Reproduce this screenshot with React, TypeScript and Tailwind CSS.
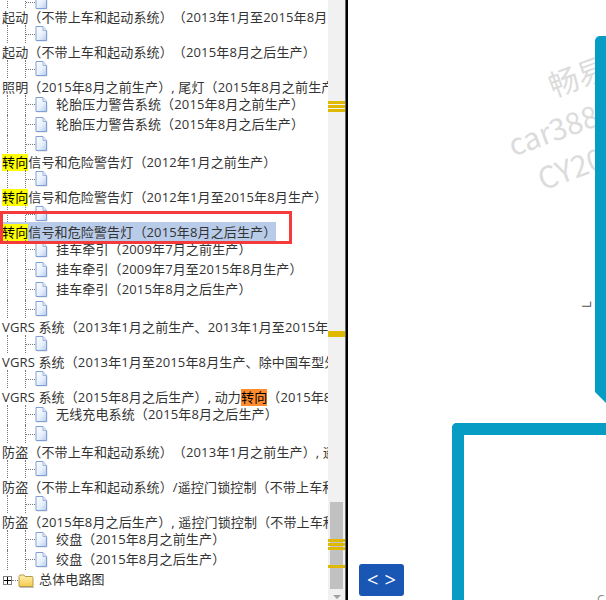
const font = "font-['Open_Sans','Noto_Sans_CJK_SC',sans-serif]";

function FileIcon() {
  return (
    <svg width="13" height="16" viewBox="0 0 13 16" className="shrink-0">
      <defs>
        <linearGradient id="fileGrad" x1="0" y1="0" x2="1" y2="1">
          <stop offset="0" stopColor="#ffffff" />
          <stop offset="0.55" stopColor="#e8f0fc" />
          <stop offset="1" stopColor="#b4ccf2" />
        </linearGradient>
      </defs>
      <path d="M2 15.5H12.5V5L9 1.5H2Z" fill="#c9c9c9" opacity="0.6" />
      <path d="M1 14.5H11.5V4.5L8 .5H1Z" fill="url(#fileGrad)" stroke="#7f9fd6" />
      <path d="M8 .5V4.5H11.5" fill="#dfe9fa" stroke="#9db6e0" />
    </svg>
  );
}

function FolderIcon() {
  return (
    <svg width="16" height="15" viewBox="0 0 16 15" className="shrink-0">
      <defs>
        <linearGradient id="folderGrad" x1="0" y1="0" x2="0" y2="1">
          <stop offset="0" stopColor="#fff3b0" />
          <stop offset="1" stopColor="#f3c94e" />
        </linearGradient>
      </defs>
      <path d="M1 3.5L2 2H6L7 3.5H14.5L15 4.5V13.5H1Z" fill="url(#folderGrad)" stroke="#b79a4a" />
      <path d="M2 14.5H16" stroke="#bdbdbd" />
    </svg>
  );
}

function Guides() {
  return (
    <>
      <span className="ml-[7px] w-[18px] shrink-0 self-stretch border-l border-dotted border-[#777]" />
      <span className="w-[10px] shrink-0 self-stretch flex flex-col border-l border-dotted border-[#777]">
        <span className="mt-[9px] w-full border-t border-dotted border-[#777]" />
      </span>
    </>
  );
}

function IconRow({ h }: { h: string }) {
  return (
    <div className={`flex ${h}`}>
      <Guides />
      <span className="mt-px"><FileIcon /></span>
    </div>
  );
}

function LeafRow({ text }: { text: string }) {
  return (
    <div className="flex h-[20px]">
      <Guides />
      <span className="mt-[2px]"><FileIcon /></span>
      <span className="ml-[8px] leading-[18px] whitespace-nowrap">{text}</span>
    </div>
  );
}

function TextRow({ children }: { children: React.ReactNode }) {
  return (
    <div className="h-[17px] pl-[2px] leading-[18px] whitespace-nowrap">{children}</div>
  );
}

const Hit = () => <span className="inline-block h-[17px] bg-[#ffff00] leading-[17px] text-black">转向</span>;

function Tree() {
  return (
    <div className="-mt-[7px] tracking-[0.14px] [text-spacing-trim:space-all] [text-autospace:no-autospace] [font-kerning:none]">
      <IconRow h="h-[15px]" />
      <TextRow>起动（不带上车和起动系统）（2013年1月至2015年8月生产）</TextRow>
      <IconRow h="h-[18px]" />
      <TextRow>起动（不带上车和起动系统）（2015年8月之后生产）</TextRow>
      <IconRow h="h-[18px]" />
      <TextRow>照明（2015年8月之前生产）, 尾灯（2015年8月之前生产）</TextRow>
      <LeafRow text="轮胎压力警告系统（2015年8月之前生产）" />
      <LeafRow text="轮胎压力警告系统（2015年8月之后生产）" />
      <IconRow h="h-[18px]" />
      <TextRow><Hit />信号和危险警告灯（2012年1月之前生产）</TextRow>
      <IconRow h="h-[18px]" />
      <TextRow><Hit />信号和危险警告灯（2012年1月至2015年8月生产）</TextRow>
      <IconRow h="h-[17px]" />
      <div className="h-[18px] pl-[2px] leading-[20px] whitespace-nowrap">
        <span className="inline-block h-[19px] bg-[#b8cbe8]"><Hit />信号和危险警告灯（2015年8月之后生产）</span>
      </div>
      <LeafRow text="挂车牵引（2009年7月之前生产）" />
      <LeafRow text="挂车牵引（2009年7月至2015年8月生产）" />
      <LeafRow text="挂车牵引（2015年8月之后生产）" />
      <IconRow h="h-[18px]" />
      <TextRow>VGRS 系统（2013年1月之前生产、2013年1月至2015年8月生产）</TextRow>
      <IconRow h="h-[18px]" />
      <TextRow>VGRS 系统（2013年1月至2015年8月生产、除中国车型外）</TextRow>
      <IconRow h="h-[18px]" />
      <TextRow>VGRS 系统（2015年8月之后生产）, 动力<span className="inline-block h-[17px] bg-[#ff8c2e] leading-[17px] text-black">转向</span>（2015年8月之后生产）</TextRow>
      <LeafRow text="无线充电系统（2015年8月之后生产）" />
      <IconRow h="h-[18px]" />
      <TextRow>防盗（不带上车和起动系统）（2013年1月之前生产）, 遥控门锁控制</TextRow>
      <IconRow h="h-[18px]" />
      <TextRow>防盗（不带上车和起动系统）/遥控门锁控制（不带上车和起动系统）</TextRow>
      <IconRow h="h-[18px]" />
      <TextRow>防盗（2015年8月之后生产）, 遥控门锁控制（不带上车和起动系统）</TextRow>
      <LeafRow text="绞盘（2015年8月之前生产）" />
      <LeafRow text="绞盘（2015年8月之后生产）" />
      <div className="flex h-[20px] items-center pl-[3px]">
        <span className="flex h-[9px] w-[9px] shrink-0 items-center justify-center border border-[#808080] bg-white">
          <svg width="7" height="7" viewBox="0 0 7 7"><path d="M0 3.5H7M3.5 0V7" stroke="#000" /></svg>
        </span>
        <span className="h-0 w-[6px] border-t border-dotted border-[#777]" />
        <FolderIcon />
        <span className="ml-[5px] whitespace-nowrap">总体电路图</span>
      </div>
    </div>
  );
}

function Mark({ top }: { top: string }) {
  return <div className={`absolute left-0 h-[3px] w-full bg-[#dfb800] ${top}`} />;
}

export default function App() {
  return (
    <div className={`flex h-[600px] w-[606px] overflow-hidden bg-white text-[13px] text-[#333] ${font}`}>
      <div className="w-[328px] shrink-0 overflow-hidden">
        <Tree />
      </div>
      <div className="relative w-[17px] shrink-0 bg-[#f1f1f1]">
        <div className="absolute left-[2px] top-[502px] h-[87px] w-[13px] bg-[#c1c1c1]" />
        <Mark top="top-[101px]" />
        <Mark top="top-[105px]" />
        <Mark top="top-[109px]" />
        <Mark top="top-[331px]" />
        <Mark top="top-[334px]" />
        <Mark top="top-[539px]" />
        <Mark top="top-[543px]" />
        <Mark top="top-[547px]" />
        <Mark top="top-[565px]" />
        <div className="absolute left-[5px] top-[595px] h-0 w-0 border-x-[4px] border-t-[4px] border-x-transparent border-t-[#a0a0a0]" />
      </div>
      <div className="w-[3px] shrink-0 border-l border-[#666] bg-black" />
      <div className="relative flex-1 overflow-hidden">
        <div className="absolute left-[165px] top-[60px] -rotate-[20deg] whitespace-nowrap text-[30px] leading-[42px] text-[#dcdcdc] font-['Noto_Sans_CJK_SC','Open_Sans',sans-serif]">
          <div className="pl-[50px]">畅易</div>
          <div className="-ml-[8px]">car388</div>
          <div className="pl-[8px]">CY20</div>
        </div>
        <div className="absolute left-[247px] top-[36px] h-[376px] w-[20px] rounded-tl-[5px] bg-[#069cc4] [clip-path:polygon(0_0,100%_0,100%_100%,0_calc(100%-20px))]" />
        <div className="absolute left-[104px] top-[423px] h-[200px] w-[200px] rounded-tl-[5px] border-l-[12px] border-t-[12px] border-[#069cc4] bg-white" />
        <div className="absolute left-[235px] top-[298px] -rotate-90 text-[13px] leading-none text-[#555]">L</div>
        <div className="absolute left-[249px] top-[594px] text-[12px] leading-none text-[#888]">C</div>
        <div className="absolute left-[11px] top-[564px] flex h-[32px] w-[45px] items-center justify-center gap-[6px] rounded-[3px] bg-[#1a56b4] text-[20px] leading-none text-white">
          <span>&lt;</span><span>&gt;</span>
        </div>
      </div>
      <div className="pointer-events-none absolute left-0 top-[211px] h-[33px] w-[292px] border-[3px] border-[#f43a3a]" />
    </div>
  );
}
